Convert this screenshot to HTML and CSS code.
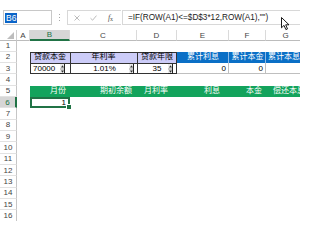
FILE: index.html
```html
<!DOCTYPE html>
<html>
<head>
<meta charset="utf-8">
<link rel="stylesheet" href="styles.css">
</head>
<body>
<div class="app">
  <div class="fbar">
    <div class="namebox"><span class="sel">B6</span></div>
    <div class="dots"><span></span><span></span><span></span></div>
    <div class="fxgroup">
      <span class="btn"><svg width="6" height="6" viewBox="0 0 6 6"><path d="M0.5 0.5L5.5 5.5M5.5 0.5L0.5 5.5" stroke="#b4b4b4" stroke-width="0.9" fill="none"/></svg></span>
      <span class="btn"><svg width="7" height="6" viewBox="0 0 7 6"><path d="M0.5 3.2L2.6 5.2L6.5 0.6" stroke="#b4b4b4" stroke-width="0.9" fill="none"/></svg></span>
      <span class="btn fx"><i>f</i><span class="x">x</span></span>
    </div>
    <div class="formula">=IF(ROW(A1)&lt;=$D$3*12,ROW(A1),"")</div>
  </div>

  <div class="sheet">
    <div class="row colhead">
      <div class="corner"><svg width="7" height="7" viewBox="0 0 7 7"><path d="M7 0L7 7L0 7Z" fill="#bdbdbd"/></svg></div>
      <div class="ch">A</div>
      <div class="ch active">B</div>
      <div class="ch">C</div>
      <div class="ch">D</div>
      <div class="ch">E</div>
      <div class="ch">F</div>
      <div class="ch">G</div>
    </div>

    <div class="row"><div class="rh">1</div></div>

    <div class="row">
      <div class="rh">2</div>
      <div></div>
      <div class="c lav tl center">贷款本金</div>
      <div class="c lav tl center">年利率</div>
      <div class="c lav tlr center">贷款年限</div>
      <div class="c blue center">累计利息</div>
      <div class="c blue center">累计本金</div>
      <div class="c blue left2">累计本息</div>
    </div>

    <div class="row">
      <div class="rh">3</div>
      <div></div>
      <div class="c tlb in-b"><span class="val">70000</span><svg class="spin" width="5" height="10" viewBox="0 0 5 10"><rect width="5" height="10" fill="#ececec"/><path d="M2.5 1.2L4 3.6L1 3.6Z" fill="#333"/><path d="M1 6.4L4 6.4L2.5 8.8Z" fill="#333"/><path d="M0 5H5" stroke="#777" stroke-width="0.6"/><path d="M4.5 0V10M0 9.5H5" stroke="#222" stroke-width="1"/></svg></div>
      <div class="c tlb in-c"><span class="val">1.01%</span><svg class="spin" width="5" height="10" viewBox="0 0 5 10"><rect width="5" height="10" fill="#ececec"/><path d="M2.5 1.2L4 3.6L1 3.6Z" fill="#333"/><path d="M1 6.4L4 6.4L2.5 8.8Z" fill="#333"/><path d="M0 5H5" stroke="#777" stroke-width="0.6"/><path d="M4.5 0V10M0 9.5H5" stroke="#222" stroke-width="1"/></svg></div>
      <div class="c tlrb in-d"><span class="val">35</span><svg class="spin" width="5" height="10" viewBox="0 0 5 10"><rect width="5" height="10" fill="#ececec"/><path d="M2.5 1.2L4 3.6L1 3.6Z" fill="#333"/><path d="M1 6.4L4 6.4L2.5 8.8Z" fill="#333"/><path d="M0 5H5" stroke="#777" stroke-width="0.6"/><path d="M4.5 0V10M0 9.5H5" stroke="#222" stroke-width="1"/></svg></div>
      <div class="c gr num">0</div>
      <div class="c gr num">0</div>
      <div class="c gr num"></div>
    </div>

    <div class="row"><div class="rh">4</div></div>

    <div class="row">
      <div class="rh">5</div>
      <div></div>
      <div class="c green r4">月份</div>
      <div class="c green r5">期初余额</div>
      <div class="c green r9">月利率</div>
      <div class="c green r9">利息</div>
      <div class="c green r4">本金</div>
      <div class="c green l7">偿还本息</div>
    </div>

    <div class="row">
      <div class="rh active">6</div>
      <div></div>
      <div class="c selcell num">1</div>
    </div>

    <div class="row"><div class="rh">7</div></div>
    <div class="row"><div class="rh">8</div></div>
    <div class="row"><div class="rh">9</div></div>
    <div class="row"><div class="rh">10</div></div>
    <div class="row"><div class="rh">11</div></div>
    <div class="row"><div class="rh">12</div></div>
    <div class="row"><div class="rh">13</div></div>
    <div class="row"><div class="rh">14</div></div>
    <div class="row"><div class="rh">15</div></div>
    <div class="row"><div class="rh">16</div></div>
  </div>

  <svg class="cursor" width="9" height="14" viewBox="0 0 9 14"><path d="M0.5 0.5L0.5 10.8L3 8.4L4.9 12.6L6.5 11.9L4.7 7.8L8 7.8Z" fill="#fff" stroke="#000" stroke-width="0.9" stroke-linejoin="round"/></svg>
</div>
</body>
</html>
```

FILE: styles.css
```css
html, body {
  margin: 0;
  padding: 0;
}
body {
  width: 300px;
  height: 221px;
  overflow: hidden;
  background: #fff;
  font-family: "Liberation Sans", "Noto Sans CJK SC", sans-serif;
  color: #000;
}
.app {
  position: relative;
  width: 300px;
  height: 221px;
  overflow: hidden;
}

/* formula bar */
.fbar {
  height: 30px;
  box-sizing: border-box;
  padding-top: 10px;
  display: flex;
  align-items: flex-start;
}
.namebox {
  margin-left: 3px;
  width: 49px;
  height: 15px;
  box-sizing: border-box;
  border: 1px solid #c8c8c8;
  display: flex;
  align-items: center;
  padding-left: 1px;
  font-size: 8.5px;
}
.namebox .sel {
  background: #0a64c8;
  color: #fff;
  padding: 0 1px;
  line-height: 10px;
}
.dots {
  width: 15px;
  height: 15px;
  display: flex;
  flex-direction: column;
  align-items: center;
  justify-content: center;
  gap: 2px;
}
.dots span {
  width: 1px;
  height: 1px;
  background: #a8a8a8;
}
.fxgroup {
  width: 54px;
  height: 15px;
  box-sizing: border-box;
  border: 1px solid #d8d8d8;
  border-right: none;
  display: flex;
  align-items: center;
}
.btn {
  width: 17px;
  height: 13px;
  display: flex;
  align-items: center;
  justify-content: center;
}
.fx {
  font-family: "Liberation Serif", serif;
  font-size: 8px;
  color: #555;
}
.fx i {
  font-style: italic;
}
.fx .x {
  font-size: 6px;
  margin-top: 3px;
}
.formula {
  margin-left: 1px;
  flex: 1;
  height: 15px;
  box-sizing: border-box;
  border: 1px solid #d8d8d8;
  border-right: none;
  padding-left: 5px;
  font-size: 8.2px;
  line-height: 13px;
  white-space: nowrap;
  color: #222;
}

/* sheet grid */
.row {
  display: grid;
  grid-template-columns: 17px 13px 40px 67px 40px 52px 37px 40px;
  height: 11.33px;
}
.colhead {
  height: 10.33px;
}
.corner {
  box-sizing: border-box;
  border-right: 1px solid #d0d0d0;
  border-bottom: 1px solid #bcbcbc;
  display: flex;
  align-items: flex-end;
  justify-content: flex-end;
  padding: 0 2px 1px 0;
}
.ch {
  box-sizing: border-box;
  border-right: 1px solid #dadada;
  border-bottom: 1px solid #bcbcbc;
  font-size: 8px;
  color: #444;
  display: flex;
  align-items: center;
  justify-content: center;
}
.ch.active {
  background: #d6d6d6;
  color: #217346;
  border-bottom: 2px solid #217346;
}
.rh {
  box-sizing: border-box;
  border-right: 1px solid #c6c6c6;
  border-bottom: 1px solid #e2e2e2;
  font-size: 8px;
  color: #444;
  display: flex;
  align-items: center;
  justify-content: center;
}
.rh.active {
  background: #d6d6d6;
  color: #217346;
  border-right: 2px solid #217346;
}

.c {
  box-sizing: border-box;
  display: flex;
  align-items: center;
  font-size: 8px;
  white-space: nowrap;
  overflow: hidden;
  min-width: 0;
  line-height: 1;
}
.center { justify-content: center; }
.left2 { padding-left: 2px; }
.num { justify-content: flex-end; padding-right: 3px; }

.lav { background: #ccccf8; }
.tl { box-shadow: inset 1px 1px 0 #333; }
.tlr { box-shadow: inset 1px 1px 0 #333, inset -1px 0 0 #333; }
.tlb { box-shadow: inset 1px 1px 0 #333, inset 0 -1px 0 #333; }
.tlrb { box-shadow: inset 1px 1px 0 #333, inset -1px -1px 0 #333; }

.blue {
  background: #0a6fc6;
  color: #fff;
  box-shadow: inset -1px 0 0 #8fbbe6;
}
.gr {
  box-shadow: inset -1px -1px 0 #bfbfbf;
}

.val { flex: 1; }
.spin { flex: none; }
.in-b { padding: 0 5px 0 3px; }
.in-b .val { text-align: left; }
.in-c { padding: 0 3px 0 10px; }
.in-c .val { text-align: center; }
.in-d { padding: 0 4px 0 9px; }
.in-d .val { text-align: center; }

.green {
  background: #13a35c;
  color: #fff;
}
.r4 { justify-content: flex-end; padding-right: 4px; }
.r5 { justify-content: flex-end; padding-right: 5px; }
.r9 { justify-content: flex-end; padding-right: 9px; }
.l7 { padding-left: 7px; }

.selcell {
  position: relative;
  overflow: visible;
  box-shadow: inset 0 0 0 2px #217346;
  padding-right: 4px;
}
.selcell::after {
  content: "";
  position: absolute;
  right: -2px;
  bottom: -2px;
  width: 4px;
  height: 4px;
  background: #217346;
  border: 1px solid #fff;
}

.cursor {
  position: absolute;
  left: 281px;
  top: 17px;
}
```
